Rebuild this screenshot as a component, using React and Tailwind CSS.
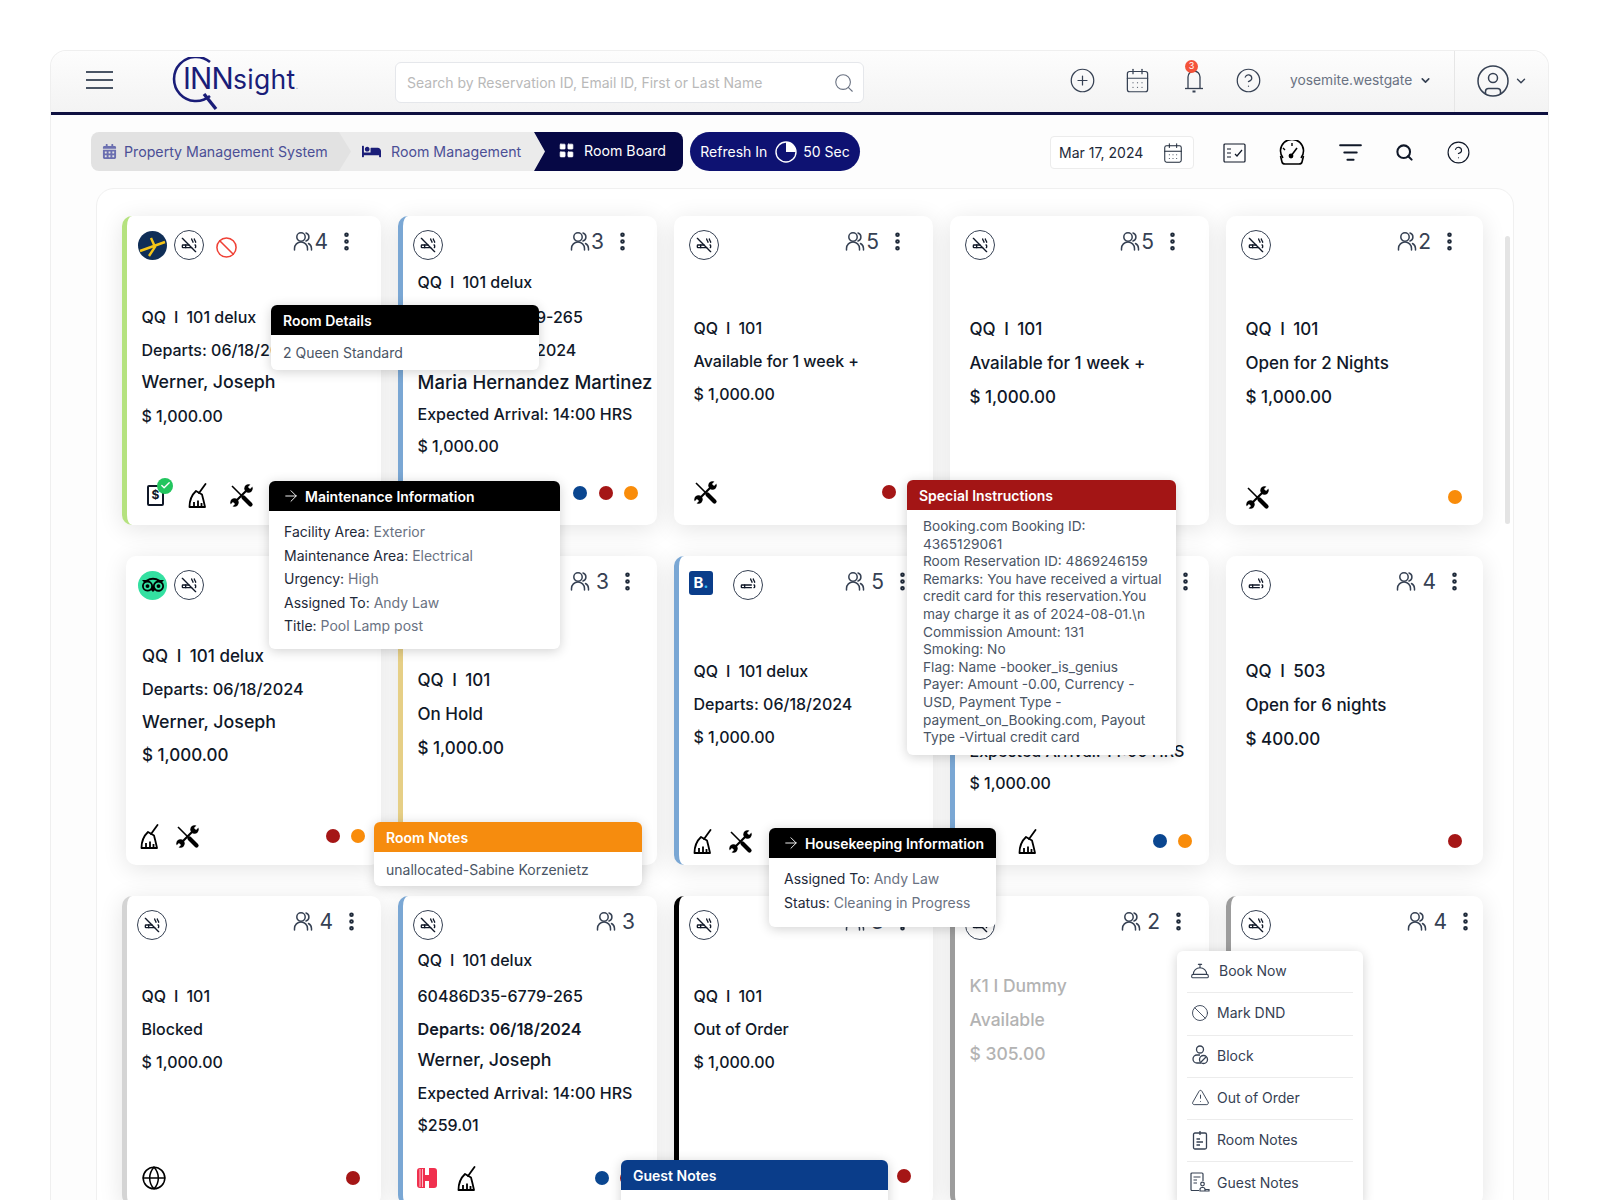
import React from "react";
import {
  ArrowRight,
  Ban,
  CalendarDays,
  Check,
  ChevronDown,
  Cigarette,
  CigaretteOff,
  CircleHelp,
  CirclePlus,
  CircleUser,
  ConciergeBell,
  EllipsisVertical,
  Globe,
  LayoutGrid,
  ListFilter,
  Search,
  TriangleAlert,
} from "lucide-react";
import { FaBed, FaCalendarAlt, FaTripadvisor } from "react-icons/fa";

const NoSmoke = () => (
  <div className="flex h-[30px] w-[30px] shrink-0 items-center justify-center rounded-full border border-gray-700 bg-white">
    <CigaretteOff size={16} strokeWidth={2} className="text-gray-900" />
  </div>
);

const Smoke = ({ extra = "" }) => (
  <div className={`flex h-[30px] w-[30px] shrink-0 items-center justify-center rounded-full border border-gray-700 bg-white ${extra}`}>
    <Cigarette size={16} strokeWidth={2} className="text-gray-900" />
  </div>
);

const Expedia = () => (
  <div className="flex h-[29px] w-[29px] shrink-0 items-center justify-center rounded-full bg-[#0f2e57]">
    <svg width="29" height="29" viewBox="0 0 29 29">
      <path d="M2 20 L27 11 M13 7 L17 16 L11 25" fill="none" stroke="#f5c518" strokeWidth="2.4" />
    </svg>
  </div>
);

const Tripadvisor = () => (
  <div className="flex h-[29px] w-[29px] shrink-0 items-center justify-center rounded-full bg-[#34e0a1]">
    <FaTripadvisor size={22} className="text-black" />
  </div>
);

const BookingB = () => (
  <div className="mt-[-4px] flex h-[24px] w-[24px] shrink-0 items-center justify-center rounded-[3px] bg-[#0a3d8a] text-[15px] font-bold text-white">
    B<span className="text-[#38bdf8]">.</span>
  </div>
);

const RedBan = () => <Ban size={23} strokeWidth={1.6} className="ml-[4px] mt-[4px] text-[#ef4136]" />;

const Guests = () => (
  <svg width="20" height="20" viewBox="0 0 20 20" fill="none" stroke="currentColor" strokeWidth="1.5" strokeLinecap="round">
    <circle cx="8" cy="6" r="4.2" />
    <path d="M1.5 19 V17.5 A6.5 6.5 0 0 1 14.5 17.5 V19" />
    <path d="M13 2 A4.2 4.2 0 0 1 13 10" />
    <path d="M15.5 12.5 A6 6 0 0 1 18.5 17.5 V19" />
  </svg>
);

const Broom = () => (
  <svg width="19" height="25" viewBox="0 0 19 25" fill="none" stroke="black" strokeWidth="1.8" strokeLinejoin="round">
    <path d="M17.5 1 L11 10" strokeLinecap="round" />
    <path d="M8 8 L14 11.5 Q15.5 17 17 24 H1.5 Q1.5 14 8 8 Z" />
    <path d="M6 24 V19 M10 24 V17.5 M13.5 24 V20" />
  </svg>
);

const Tools = () => (
  <svg width="25" height="25" viewBox="0 0 25 25">
    <path d="M3 3 L13 13" stroke="black" strokeWidth="1.6" />
    <path d="M14.5 14.5 L21.5 21.5" stroke="black" strokeWidth="4.2" strokeLinecap="round" />
    <path d="M6 19 L19 6" stroke="black" strokeWidth="2.2" />
    <circle cx="19.5" cy="5.5" r="4.2" fill="black" />
    <path d="M20 5 L24 1" stroke="white" strokeWidth="3" />
    <circle cx="5.5" cy="19.5" r="4.2" fill="black" />
    <path d="M5 20 L1 24" stroke="white" strokeWidth="3" />
  </svg>
);

const Invoice = () => (
  <div className="relative mr-[2px] flex h-[21px] w-[17px] items-center justify-center rounded-[2px] border-2 border-gray-900 text-[12px] font-bold text-gray-900">
    $
    <div className="absolute left-[8px] top-[-9px] flex h-[16px] w-[16px] items-center justify-center rounded-full bg-[#22c55e]">
      <Check size={11} strokeWidth={3} className="text-white" />
    </div>
  </div>
);

const HotelsH = () => (
  <svg width="20" height="22" viewBox="0 0 20 22">
    <path
      d="M3 1 H8 V8 H12 V1 H17 Q20 1 20 4 V18 Q20 21 17 21 H12 V14 H8 V21 H3 Q0 21 0 18 V4 Q0 1 3 1 Z"
      fill="#f0304e"
    />
    <path d="M3 2 V20 M5.5 2 V20" stroke="#fff" strokeWidth="0.7" />
  </svg>
);

const Dot = ({ color }) => <span className={`h-[14px] w-[14px] rounded-full ${color}`} />;
const BLUE = "bg-[#0a4690]";
const RED = "bg-[#a51616]";
const ORANGE = "bg-[#f98c0a]";

const QQ_DELUX = "QQ\u2002I\u2002101 delux";
const QQ_101 = "QQ\u2002I\u2002101";
const NAME = "text-[17.8px]";

// each line is [text, height class, size class, weight class]
const cards = [
  {
    accent: "border-l-[#b5e27f]",
    icons: [<Expedia key="a" />, <NoSmoke key="b" />, <RedBan key="c" />],
    guests: 4,
    tight: true,
    top: "mt-[39px]",
    topRight: "pr-[23px]",
    iconsLeft: "pl-[11px]",
    lines: [[QQ_DELUX], ["Departs: 06/18/2024"], ["Werner, Joseph", null, NAME], ["$ 1,000.00"]],
    footer: [<Invoice key="a" />, <Broom key="b" />, <Tools key="c" />],
    footerGap: "gap-[22px]",
    footerLeft: "pl-[20px]",
  },
  {
    accent: "border-l-[#7aa7d4]",
    icons: [<NoSmoke key="a" />],
    guests: 3,
    tight: true,
    top: "mt-[2px]",
    topRight: "pr-[23px]",
    lines: [
      [QQ_DELUX, "h-[37px]"],
      ["60486D35-6779-265"],
      ["Departs: 06/18/2024"],
      ["Maria Hernandez Martinez", null, "text-[18.5px]"],
      ["Expected Arrival: 14:00 HRS", "h-[30px]"],
      ["$ 1,000.00"],
    ],
    dots: [BLUE, RED, ORANGE],
    dotsRight: "pr-[19px]",
    footerBottom: "mb-[20px]",
  },
  {
    icons: [<NoSmoke key="a" />],
    guests: 5,
    tight: true,
    top: "mt-[50px]",
    topRight: "pr-[24px]",
    lines: [[QQ_101], ["Available for 1 week +"], ["$ 1,000.00"]],
    footer: [<Tools key="a" />],
    dots: [RED, ORANGE],
    dotsRight: "pr-[12px]",
    footerBottom: "mb-[21px]",
  },
  {
    icons: [<NoSmoke key="a" />],
    guests: 5,
    tight: true,
    top: "mt-[52px]",
    topRight: "pr-[25px]",
    big: true,
    lines: [[QQ_101], ["Available for 1 week +"], ["$ 1,000.00"]],
  },
  {
    icons: [<NoSmoke key="a" />],
    guests: 2,
    tight: true,
    top: "mt-[52px]",
    topRight: "pr-[22px]",
    big: true,
    lines: [[QQ_101], ["Open for 2 Nights"], ["$ 1,000.00"]],
    footer: [<Tools key="a" />],
    dots: [ORANGE],
    dotsRight: "pr-[21px]",
    footerBottom: "mb-[16px]",
  },
  {
    narrow: true,
    icons: [<Tripadvisor key="a" />, <NoSmoke key="b" />],
    guests: 3,
    top: "mt-[39px]",
    big: true,
    topRight: "pr-[23px]",
    lines: [
      [QQ_DELUX, "h-[33px]"],
      ["Departs: 06/18/2024", "h-[33px]", "text-[16.3px]"],
      ["Werner, Joseph", "h-[33px]", NAME],
      ["$ 1,000.00", "h-[33px]"],
    ],
    footer: [<Broom key="a" />, <Tools key="b" />],
    footerGap: "gap-[16px]",
    dots: [RED, ORANGE],
    dotsRight: "pr-[16px]",
    footerBottom: "mb-[17px]",
  },
  {
    accent: "border-l-[#e6cf86]",
    icons: [],
    guests: 3,
    top: "mt-[63px]",
    big: true,
    topRight: "pr-[18px]",
    lines: [[QQ_101], ["On Hold"], ["$ 1,000.00"]],
  },
  {
    accent: "border-l-[#7aa7d4]",
    icons: [<BookingB key="a" />, <Smoke key="b" extra="ml-[10px]" />],
    guests: 5,
    top: "mt-[53px]",
    topRight: "pr-[19px]",
    lines: [[QQ_DELUX], ["Departs: 06/18/2024"], ["$ 1,000.00"]],
    footer: [<Broom key="a" />, <Tools key="b" />],
    footerGap: "gap-[16px]",
    iconsGap: "gap-[10px]",
    footerBottom: "mb-[12px]",
  },
  {
    accent: "border-l-[#7aa7d4]",
    icons: [],
    guests: 3,
    top: "-mt-[1px]",
    topRight: "pr-[12px]",
    lines: [
      [QQ_DELUX, "h-[37px]"],
      ["60486D35-6779-265"],
      ["Departs: 06/18/2024"],
      ["Werner, Joseph", null, NAME],
      ["Expected Arrival: 14:00 HRS", "h-[30px]"],
      ["$ 1,000.00"],
    ],
    footer: [<span key="a" className="w-[49px]" />, <Broom key="b" />],
    dots: [BLUE, ORANGE],
    dotsRight: "pr-[17px]",
    footerBottom: "mb-[12px]",
  },
  {
    icons: [<Smoke key="a" />],
    guests: 4,
    top: "mt-[54px]",
    big: true,
    topRight: "pr-[17px]",
    lines: [[QQ_101.replace("101", "503")], ["Open for 6 nights"], ["$ 400.00"]],
    dots: [RED],
    dotsRight: "pr-[21px]",
    footerBottom: "mb-[12px]",
  },
  {
    accent: "border-l-[#d4d4d4]",
    icons: [<NoSmoke key="a" />],
    guests: 4,
    top: "mt-[38px]",
    topRight: "pr-[18px]",
    lines: [[QQ_101], ["Blocked"], ["$ 1,000.00"]],
    footer: [<Globe key="a" size={26} strokeWidth={1.4} className="text-black" />],
    dots: [RED],
    dotsRight: "pr-[21px]",
    footerBottom: "mb-[15px]",
  },
  {
    accent: "border-l-[#7aa7d4]",
    icons: [<NoSmoke key="a" />],
    guests: 3,
    noMenu: true,
    top: "mt-[1px]",
    topRight: "pr-[22px]",
    lines: [
      [QQ_DELUX, "h-[36px]"],
      ["60486D35-6779-265", "h-[36px]"],
      ["Departs: 06/18/2024", "h-[30px]", "text-[16.3px]", "font-semibold"],
      ["Werner, Joseph", null, NAME],
      ["Expected Arrival: 14:00 HRS", "h-[31px]"],
      ["$259.01", "h-[34px]"],
    ],
    footer: [<HotelsH key="a" />, <Broom key="b" />],
    footerGap: "gap-[20px]",
    dots: [BLUE, RED],
    dotsRight: "pr-[23px]",
    footerBottom: "mb-[15px]",
  },
  {
    accent: "border-l-black",
    icons: [<NoSmoke key="a" />],
    guests: 3,
    top: "mt-[38px]",
    topRight: "pr-[19px]",
    lines: [[QQ_101], ["Out of Order"], ["$ 1,000.00"]],
    dots: [RED],
    dotsRight: "pr-[22px]",
    footerBottom: "mb-[17px]",
  },
  {
    accent: "border-l-[#9c9c9c]",
    icons: [<NoSmoke key="a" />],
    guests: 2,
    top: "mt-[28px]",
    topRight: "pr-[19px]",
    muted: true,
    lines: [
      ["K1 I Dummy", "h-[34px]", "text-[17.5px]"],
      ["Available", "h-[34px]", "text-[17.5px]"],
      ["$ 305.00", "h-[34px]", "text-[17.5px]"],
    ],
  },
  {
    accent: "border-l-[#9c9c9c]",
    icons: [<NoSmoke key="a" />],
    guests: 4,
    top: "mt-[37px]",
    topRight: "pr-[6px]",
    lines: [],
  },
];

const RoomCard = ({ card, last }) => (
  <div
    className={`flex h-[309px] flex-col rounded-[10px] bg-white shadow-[0_4px_24px_rgba(0,0,0,0.11)] ${
      card.narrow ? "ml-[4px] border-l-0" : "border-l-[5px]"
    } ${card.accent || "border-l-white"} ${last ? "w-[257px]" : ""}`}
  >
    <div
      className={`flex items-start justify-between pt-[14px] ${
        card.iconsLeft || (card.narrow ? "pl-[12px]" : "pl-[10px]")
      } ${card.topRight}`}
    >
      <div className={`flex h-[30px] items-center ${card.iconsGap || "gap-[7px]"}`}>{card.icons}</div>
      <div className="flex h-[22px] items-center text-gray-700">
        <div className={`flex items-center ${card.tight ? "gap-[1px]" : "gap-[6px]"}`}>
          <Guests />
          <span className="text-[21px] leading-none">{card.guests}</span>
        </div>
        {!card.noMenu && (
          <EllipsisVertical size={23} strokeWidth={2.8} className="ml-[7px] text-gray-800" />
        )}
      </div>
    </div>
    <div className={`pt-[1px] ${card.narrow ? "pl-[16px]" : "pl-[14.5px]"} ${card.top}`}>
      {card.lines.map(([text, height, size, weight]) => (
        <div
          key={text}
          className={`flex items-center whitespace-nowrap ${weight || "font-medium"} ${
            card.muted ? "text-[#b3b3b3]" : "text-gray-900"
          } ${height || (card.big ? "h-[34px]" : "h-[33px]")} ${size || (card.big ? "text-[17px]" : "text-[16px]")}`}
        >
          {text}
        </div>
      ))}
    </div>
    <div className={`mt-auto flex h-[24px] items-center justify-between ${card.footerBottom || "mb-[18px]"}`}>
      <div className={`flex items-center ${card.footerGap || ""} ${card.footerLeft || "pl-[14px]"}`}>
        {card.footer}
      </div>
      <div className={`flex items-center gap-[11.5px] ${card.dotsRight || ""}`}>
        {(card.dots || []).map((color, i) => (
          <Dot key={i} color={color} />
        ))}
      </div>
    </div>
  </div>
);

// popovers that sit over the board
const Popover = ({ title, head, arrow, pos, children }) => (
  <div className={`absolute z-30 overflow-hidden rounded-[6px] bg-white shadow-[0_2px_12px_rgba(0,0,0,0.18)] ${pos}`}>
    <div className={`flex h-[30px] items-center gap-[5px] whitespace-nowrap px-[12px] text-[14px] font-semibold text-white ${head}`}>
      {arrow && <ArrowRight size={18} strokeWidth={1.25} className="ml-[1px]" />}
      {title}
    </div>
    {children}
  </div>
);

const Field = ({ label, value }) => (
  <div className="h-[23.5px] whitespace-nowrap text-[14px] leading-[23.5px] text-gray-800">
    {label}: <span className="text-gray-500">{value}</span>
  </div>
);

const specialLines = [
  "Booking.com Booking ID:",
  "4365129061",
  "Room Reservation ID: 4869246159",
  "Remarks: You have received a virtual",
  "credit card for this reservation.You",
  "may charge it as of 2024-08-01.\\n",
  "Commission Amount: 131",
  "Smoking: No",
  "Flag: Name -booker_is_genius",
  "Payer: Amount -0.00, Currency -",
  "USD, Payment Type -",
  "payment_on_Booking.com, Payout",
  "Type -Virtual credit card",
];

const BlockIcon = () => (
  <svg width="18" height="20" viewBox="0 0 18 20" fill="none" stroke="currentColor" strokeWidth="1.3">
    <circle cx="9" cy="4.5" r="3.5" />
    <path d="M9 10 H6 A4 4 0 0 0 6 18 H10" />
    <circle cx="12.5" cy="14.5" r="4" />
    <path d="M10 17 L15 12" />
  </svg>
);

const RoomNotesIcon = () => (
  <svg width="16" height="20" viewBox="0 0 16 20" fill="none" stroke="currentColor" strokeWidth="1.3">
    <rect x="1.5" y="3" width="13" height="16" rx="1.5" />
    <path d="M8 1 V5 M4.5 9 H8 M4.5 12 H11 M4.5 15 H8" />
  </svg>
);

const GuestNotesIcon = () => (
  <svg width="20" height="20" viewBox="0 0 20 20" fill="none" stroke="currentColor" strokeWidth="1.2">
    <path d="M9 18.5 H2 A1 1 0 0 1 1 17.5 V2 A1 1 0 0 1 2 1 H12 A1 1 0 0 1 13 2 V9" />
    <path d="M3.5 5 H10.5 M3.5 8 H7 M3.5 11 H7" />
    <circle cx="12.5" cy="12" r="1.8" />
    <path d="M10 19 V17 A2 2 0 0 1 12 15.5 H13 A2 2 0 0 1 15 17 V19 Z M15 19 V17.5 H19 V19 Z" />
  </svg>
);

const menuItems = [
  { label: "Book Now", icon: <ConciergeBell size={20} strokeWidth={1.3} />, gap: "gap-[9px]" },
  { label: "Mark DND", icon: <Ban size={18} strokeWidth={1.2} /> },
  { label: "Block", icon: <BlockIcon /> },
  { label: "Out of Order", icon: <TriangleAlert size={19} strokeWidth={1.2} /> },
  { label: "Room Notes", icon: <RoomNotesIcon /> },
  { label: "Guest Notes", icon: <GuestNotesIcon /> },
];

const BellIcon = () => (
  <svg width="22" height="26" viewBox="0 0 22 26" fill="none" stroke="currentColor" strokeWidth="1.3">
    <path d="M5 20 V9 A6 6 0 0 1 17 9 V20" />
    <path d="M2 20.5 H20" />
    <path d="M9.5 23.5 H12.5" strokeWidth="2" />
  </svg>
);

const GaugeIcon = () => (
  <svg width="28" height="26" viewBox="0 0 28 26" fill="none" stroke="black" strokeWidth="1.6">
    <path d="M5 18 A11.5 11.5 0 1 1 23 18" />
    <path d="M2.5 16 L4 22 Q4.5 24 7 24 H21 Q23.5 24 24 22 L25.5 16" />
    <path d="M13 16 L19 8" strokeWidth="1.6" />
    <circle cx="13" cy="16" r="2.4" fill="black" stroke="none" />
    <path d="M14 3 V6 M5 8 L7 10" strokeWidth="1.4" />
  </svg>
);

const Logo = () => (
  <div className="relative ml-[59px] mb-[3px] h-[56px] w-[124px] shrink-0">
    <svg className="absolute left-0 top-[5px]" width="62" height="56" viewBox="0 0 62 56" fill="none" stroke="#1a1d78" strokeWidth="2.6">
      <path d="M38 5 A22 22 0 1 0 38 39" />
      <path d="M32 37 L44 52" strokeWidth="3.4" />
    </svg>
    <span className="absolute left-[11px] top-[7px] whitespace-nowrap text-[29.5px] leading-[38px] tracking-[-0.8px] text-[#1a1d78]">
      INN<span className="text-[26.5px] tracking-[0.3px]">sight</span>
      <span className="text-[10px] text-gray-400">.</span>
    </span>
  </div>
);

const App = () => {
  return (
    <div className="relative h-[1200px] w-[1600px] overflow-hidden bg-white font-['Inter',sans-serif]">
      <div className="ml-[50px] h-[1200px] w-[1499px] pt-[50px]">
        <div className="h-[1150px] rounded-t-[16px] border border-b-0 border-[#efefef] bg-[#fdfdfd]">
          {/* top bar */}
          <div className="flex h-[64px] items-center rounded-t-[16px] border-b-[3px] border-[#0e1040] bg-gradient-to-b from-[#fdfdfd] to-[#f3f3f3]">
            <div className="mb-[4px] ml-[35px] flex w-[27px] flex-col gap-[6px]">
              <span className="h-[2px] bg-gray-600" />
              <span className="h-[2px] bg-gray-600" />
              <span className="h-[2px] bg-gray-600" />
            </div>
            <Logo />
            <div className="ml-[99px] mt-[2px] flex h-[41px] w-[469px] items-center justify-between rounded-[6px] border border-gray-200 bg-white pl-[11px] pr-[8px] text-[14px] text-[#b9b9b9]">
              <span>Search by Reservation ID, Email ID, First or Last Name</span>
              <Search size={22} strokeWidth={1.2} className="text-gray-500" />
            </div>
            <div className="mb-[2px] ml-[205px] flex items-center gap-[28px] text-gray-700">
              <CirclePlus size={27} strokeWidth={1.1} />
              <CalendarDays size={27} strokeWidth={1.1} />
              <div className="relative ml-[4px] mr-[2px]">
                <BellIcon />
                <span className="absolute left-[2px] top-[-8px] flex h-[13px] w-[13px] items-center justify-center rounded-full bg-[#f4533a] text-[9px] text-white">
                  3
                </span>
              </div>
              <CircleHelp size={27} strokeWidth={1.1} />
            </div>
            <span className="mb-[2px] ml-[28px] text-[13.8px] text-gray-500">yosemite.westgate</span>
            <ChevronDown size={13} strokeWidth={3} className="mb-[2px] ml-[7px] text-gray-700" />
            <div className="ml-[22px] flex h-full items-center border-l border-[#e6e6e6] pb-[2px] pl-[20px] text-gray-700">
              <CircleUser size={36} strokeWidth={1} />
              <ChevronDown size={14} strokeWidth={2.4} className="ml-[3px]" />
            </div>
          </div>

          {/* breadcrumb row */}
          <div className="flex items-center pl-[40px] pr-[77px] pt-[17px] text-[14.2px]">
            <div className="flex h-[39px]">
              <div className="z-20 flex w-[260px] items-center gap-[7px] rounded-l-[8px] bg-[#e2e2e2] pl-[11px] text-[#4b4f96] [clip-path:polygon(0_0,calc(100%-12px)_0,100%_50%,calc(100%-12px)_100%,0_100%)]">
                <FaCalendarAlt size={15} className="text-[#6b6fb0]" />
                Property Management System
              </div>
              <div className="z-10 -ml-[12px] flex w-[207px] items-center gap-[10px] bg-[#ebebeb] pl-[23px] text-[#4b4f96] [clip-path:polygon(0_0,calc(100%-12px)_0,100%_50%,calc(100%-12px)_100%,0_100%)]">
                <FaBed size={19} className="text-[#1a1d78]" />
                Room Management
              </div>
              <div className="z-20 -ml-[12px] flex w-[149px] items-center gap-[9px] rounded-r-[8px] bg-[#060845] pb-[2px] pl-[24px] text-white [clip-path:polygon(0_0,100%_0,100%_100%,0_100%,11px_50%)]">
                <LayoutGrid size={17} fill="white" strokeWidth={1} />
                Room Board
              </div>
            </div>
            <div className="ml-[7px] flex h-[39px] w-[170px] items-center justify-center gap-[6px] rounded-full bg-[#0e1272] text-[14px] text-white">
              Refresh In
              <svg width="22" height="22" viewBox="0 0 22 22" className="ml-[2px]">
                <circle cx="11" cy="11" r="10" fill="none" stroke="white" strokeWidth="1.4" />
                <path d="M11 11 V1 A10 10 0 0 1 21 11 Z" fill="white" />
              </svg>
              50 Sec
            </div>
            <div className="ml-auto mt-[2px] flex h-[33px] w-[144px] items-center justify-between rounded-[4px] border border-[#ececec] bg-white pl-[8px] pr-[9px] text-[14px] text-gray-800">
              Mar 17, 2024
              <CalendarDays size={22} strokeWidth={1.1} />
            </div>
            <div className="ml-[29px] mt-[2px] flex items-center gap-[32px] text-gray-900">
              <svg width="23" height="20" viewBox="0 0 23 20" fill="none" stroke="currentColor" strokeWidth="1.2">
                <rect x="1" y="1" width="21" height="18" rx="1" />
                <path d="M4 6 H8 M4 10 H8 M4 14 H8 M12 11 L14 13 L19 7" />
              </svg>
              <GaugeIcon />
              <ListFilter size={25} strokeWidth={1.8} />
              <Search size={19} strokeWidth={2.6} />
              <CircleHelp size={25} strokeWidth={1.1} />
            </div>
          </div>

          {/* board */}
          <div className="relative ml-[45px] mt-[17px] h-[1100px] w-[1418px] rounded-t-[18px] border border-[#f0f0f0] bg-white pl-[25px] pt-[27px]">
            <div className="grid w-[1364px] grid-cols-[repeat(5,259px)] gap-x-[17px] gap-y-[31px]">
              {cards.map((card, i) => (
                <RoomCard key={i} card={card} last={i % 5 === 4} />
              ))}
            </div>
            <div className="absolute left-[1408px] top-[47px] h-[288px] w-[5px] rounded-full bg-[#e4e4e4]" />
          </div>
        </div>
      </div>

      <Popover title="Room Details" head="bg-black" pos="left-[271px] top-[305px] w-[268px]">
        <div className="flex h-[35px] items-center px-[12px] text-[14px] text-gray-600">2 Queen Standard</div>
      </Popover>

      <Popover title="Maintenance Information" head="bg-black" arrow pos="left-[269px] top-[481px] w-[291px]">
        <div className="px-[15px] pb-[11px] pt-[9px]">
          <Field label="Facility Area" value="Exterior" />
          <Field label="Maintenance Area" value="Electrical" />
          <Field label="Urgency" value="High" />
          <Field label="Assigned To" value="Andy Law" />
          <Field label="Title" value="Pool Lamp post" />
        </div>
      </Popover>

      <Popover title="Special Instructions" head="bg-[#a31515]" pos="left-[907px] top-[480px] w-[269px]">
        <div className="px-[16px] pb-[8px] pt-[8px] text-[13.7px] leading-[17.6px] text-gray-600">
          {specialLines.map((line) => (
            <div key={line} className="whitespace-nowrap">
              {line}
            </div>
          ))}
        </div>
      </Popover>

      <Popover title="Room Notes" head="bg-[#f68c0e]" pos="left-[374px] top-[822px] w-[268px]">
        <div className="flex h-[34px] items-center px-[12px] text-[14px] text-gray-600">
          unallocated-Sabine Korzenietz
        </div>
      </Popover>

      <Popover title="Housekeeping Information" head="bg-black" arrow pos="left-[769px] top-[828px] w-[227px]">
        <div className="px-[15px] pb-[13px] pt-[9px]">
          <Field label="Assigned To" value="Andy Law" />
          <Field label="Status" value="Cleaning in Progress" />
        </div>
      </Popover>

      <Popover title="Guest Notes" head="bg-[#0a3d8a]" pos="left-[621px] top-[1160px] w-[267px]">
        <div className="h-[40px]" />
      </Popover>

      {/* kebab menu */}
      <div className="absolute left-[1177px] top-[951px] z-30 w-[186px] rounded-[6px] bg-white px-[10px] shadow-[0_2px_12px_rgba(0,0,0,0.18)]">
        {menuItems.map((item) => (
          <div
            key={item.label}
            className={`flex h-[42.3px] items-center border-b border-[#ececec] pb-[2px] pl-[3px] text-[14px] text-gray-700 ${
              item.gap || "gap-[7px]"
            }`}
          >
            <span className="flex w-[20px] justify-center text-gray-700">{item.icon}</span>
            {item.label}
          </div>
        ))}
      </div>
    </div>
  );
};

export default App;
